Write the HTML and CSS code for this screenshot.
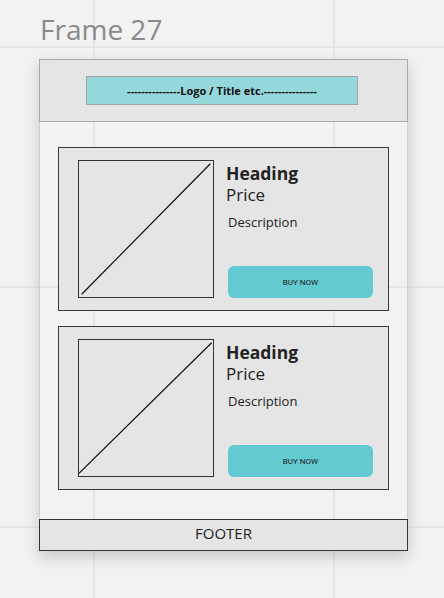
FILE: index.html
```html
<!DOCTYPE html>
<html lang="en">
<head>
  <meta charset="UTF-8" />
  <meta name="viewport" content="width=device-width, initial-scale=1" />
  <title>Frame 27</title>
  <link rel="stylesheet" href="styles.css">
</head>
<body>

  <h1 class="frame-title">Frame 27</h1>

  <div class="frame">
    <div class="frame-head">
      <div class="logo-bar">---------------Logo / Title etc.---------------</div>
    </div>

    <div class="frame-body">
      <div class="card">
        <div class="thumb">
          <svg viewBox="0 0 100 100" preserveAspectRatio="none">
            <line x1="2" y1="98" x2="98" y2="2" vector-effect="non-scaling-stroke" />
          </svg>
        </div>
        <div class="info">
          <div class="heading">Heading</div>
          <div class="price">Price</div>
          <div class="desc">Description</div>
          <button class="buy">BUY NOW</button>
        </div>
      </div>

      <div class="card">
        <div class="thumb">
          <svg viewBox="0 0 100 100" preserveAspectRatio="none">
            <line x1="0" y1="98" x2="99" y2="2" vector-effect="non-scaling-stroke" />
          </svg>
        </div>
        <div class="info">
          <div class="heading">Heading</div>
          <div class="price">Price</div>
          <div class="desc">Description</div>
          <button class="buy">BUY NOW</button>
        </div>
      </div>
    </div>

    <div class="frame-foot">FOOTER</div>
  </div>

</body>
</html>
```

FILE: styles.css
```css
/* Canvas */
body {
  margin: 0;
  height: 598px;
  overflow: hidden;
  font-family: "Open Sans", "Liberation Sans", sans-serif;
  background-color: #f2f2f2;
  background-image:
    linear-gradient(to right, #e6e6e6 2px, transparent 2px),
    linear-gradient(to bottom, #e6e6e6 2px, transparent 2px);
  background-size: 240px 240px;
  background-position: 93px 46px;
}
.frame-title {
  margin: 13px 0 14px 40px;
  font-size: 28px;
  line-height: 32px;
  font-weight: 400;
  color: #8a8a8a;
}

/* Frame */
.frame {
  width: 369px;
  margin-left: 39px;
  box-shadow: 0 6px 14px rgba(0, 0, 0, 0.18);
}
.frame-head {
  height: 63px;
  box-sizing: border-box;
  border: 1px solid #a9a9a9;
  background-color: #e5e5e5;
  padding-top: 16px;
}
.logo-bar {
  width: 272px;
  height: 29px;
  box-sizing: border-box;
  margin-left: 46px;
  border: 1px solid #a3a3a3;
  background-color: #94d8dc;
  color: #111;
  font-size: 11px;
  font-weight: bold;
  line-height: 27px;
  text-align: center;
  white-space: nowrap;
  overflow: hidden;
}
.frame-body {
  border-left: 1px solid #cfcfcf;
  border-right: 1px solid #cfcfcf;
  padding: 25px 18px 29px;
  display: flex;
  flex-direction: column;
  gap: 15px;
}

/* Cards */
.card {
  display: grid;
  grid-template-columns: 136px 1fr;
  gap: 12px;
  border: 1px solid #3a3a3a;
  background-color: #e5e5e5;
  padding: 12px 15px 12px 19px;
}
.thumb {
  height: 138px;
  box-sizing: border-box;
  border: 1px solid #333;
}
.thumb svg {
  display: block;
  width: 100%;
  height: 100%;
}
.thumb line {
  stroke: #111;
  stroke-width: 1.2;
}
.info {
  display: flex;
  flex-direction: column;
  color: #222;
}
.heading {
  margin-top: 3px;
  font-size: 17.5px;
  font-weight: bold;
  line-height: 21px;
}
.price {
  font-size: 17px;
  line-height: 22px;
}
.desc {
  margin-top: 7px;
  padding-left: 2px;
  font-size: 13px;
  line-height: 18px;
}
.buy {
  margin-top: auto;
  margin-left: 2px;
  height: 32px;
  border: none;
  border-radius: 6px;
  background-color: #63cad1;
  color: #1a1a1a;
  font-family: Roboto, "Liberation Sans", sans-serif;
  font-size: 8px;
  padding: 0;
}

/* Footer */
.frame-foot {
  height: 32px;
  box-sizing: border-box;
  border: 1px solid #333;
  background-color: #e5e5e5;
  font-size: 15px;
  line-height: 26px;
  text-align: center;
  color: #222;
}
```
